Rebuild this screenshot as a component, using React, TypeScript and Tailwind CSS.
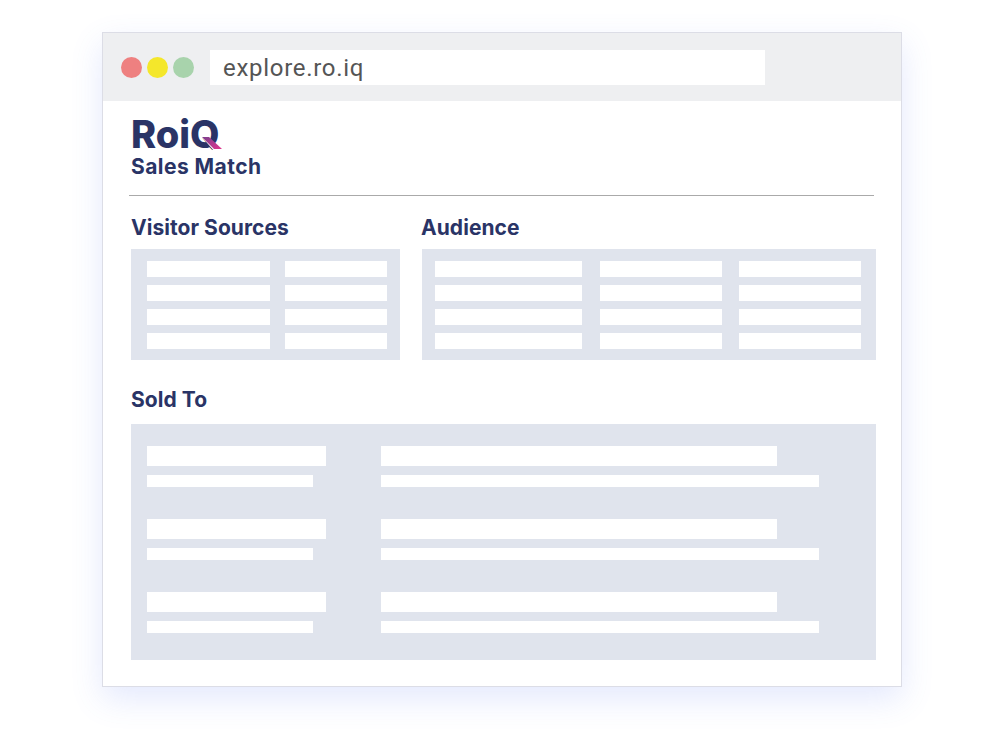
const headingFont = "font-['Inter',sans-serif]";

function Bar({ className }: { className: string }) {
  return <div className={`bg-white ${className}`} />;
}

function Heading({ children }: { children: string }) {
  return (
    <h2 className={`${headingFont} pt-px text-[21px] leading-[24px] font-bold tracking-[0.05px] text-[#2a3466]`}>
      {children}
    </h2>
  );
}

function Logo() {
  return (
    <div className="relative h-[36px] w-[95px]">
      <span className="font-['Inter',sans-serif] block text-[38px] leading-[36px] font-extrabold tracking-[0px] text-[#2a3466]">
        RoiQ
      </span>
      <svg className="absolute top-0 left-0" width="95" height="36" viewBox="0 0 95 36">
        <defs>
          <linearGradient id="tail" x1="0" y1="0" x2="1" y2="1">
            <stop offset="0" stopColor="#7b3f8f" />
            <stop offset="1" stopColor="#e0358c" />
          </linearGradient>
        </defs>
        <polygon points="70,20 76,20 93,36 84,36" fill="#ffffff" />
        <polygon points="71,21 78,21 91,33 83,33" fill="url(#tail)" />
      </svg>
    </div>
  );
}

const soldRows = [0, 1, 2];

export default function App() {
  return (
    <div className="h-[750px] w-[1000px] overflow-hidden bg-white pt-[32px] pl-[102px]">
      <div className="h-[655px] w-[800px] border border-[#dcdde6] bg-white shadow-[0_12px_30px_rgba(90,120,240,0.16)]">
        {/* browser bar */}
        <div className="flex h-[68px] items-center bg-[#eeeff1] pl-[18px]">
          <div className="flex gap-[5px]">
            <div className="h-[21px] w-[21px] rounded-full bg-[#ee8080]" />
            <div className="h-[21px] w-[21px] rounded-full bg-[#f4e72b]" />
            <div className="h-[21px] w-[21px] rounded-full bg-[#a8d3ac]" />
          </div>
          <div className="ml-[16px] flex h-[35px] w-[555px] items-center bg-white pt-[2px] pl-[13px] font-['Roboto',sans-serif] text-[24px] tracking-[0.7px] text-[#555555]">
            explore.ro.iq
          </div>
        </div>

        <div className="pt-[15px] pl-[28px]">
          <Logo />
          <div className={`${headingFont} mt-[2px] text-[21px] leading-[26px] font-bold tracking-[0.45px] text-[#2a3466]`}>
            Sales Match
          </div>
          <div className="mt-[15px] -ml-[2px] h-px w-[745px] bg-[#aaaaaa]" />

          {/* top panels */}
          <div className="mt-[19px] flex gap-[22px]">
            <div className="w-[269px]">
              <Heading>Visitor Sources</Heading>
              <div className="mt-[9px] flex h-[111px] flex-col gap-[8px] bg-[#e0e4ed] pt-[12px] pl-[16px]">
                {[0, 1, 2, 3].map((i) => (
                  <div key={i} className="flex gap-[15px]">
                    <Bar className="h-[16px] w-[123px]" />
                    <Bar className="h-[16px] w-[102px]" />
                  </div>
                ))}
              </div>
            </div>
            <div className="w-[454px]">
              <div className="-ml-px">
                <Heading>Audience</Heading>
              </div>
              <div className="mt-[9px] flex h-[111px] flex-col gap-[8px] bg-[#e0e4ed] pt-[12px] pl-[13px]">
                {[0, 1, 2, 3].map((i) => (
                  <div key={i} className="flex">
                    <Bar className="h-[16px] w-[147px]" />
                    <Bar className="ml-[18px] h-[16px] w-[122px]" />
                    <Bar className="ml-[17px] h-[16px] w-[122px]" />
                  </div>
                ))}
              </div>
            </div>
          </div>

          {/* sold to */}
          <div className="mt-[27px] w-[745px]">
            <Heading>Sold To</Heading>
            <div className="mt-[12px] flex h-[236px] flex-col gap-[32px] bg-[#e0e4ed] pt-[22px] pl-[16px]">
              {soldRows.map((i) => (
                <div key={i} className="flex gap-[55px]">
                  <div className="flex w-[179px] flex-col gap-[9px]">
                    <Bar className="h-[20px] w-[179px]" />
                    <Bar className="h-[12px] w-[166px]" />
                  </div>
                  <div className="flex flex-col gap-[9px]">
                    <Bar className="h-[20px] w-[396px]" />
                    <Bar className="h-[12px] w-[438px]" />
                  </div>
                </div>
              ))}
            </div>
          </div>
        </div>
      </div>
    </div>
  );
}
